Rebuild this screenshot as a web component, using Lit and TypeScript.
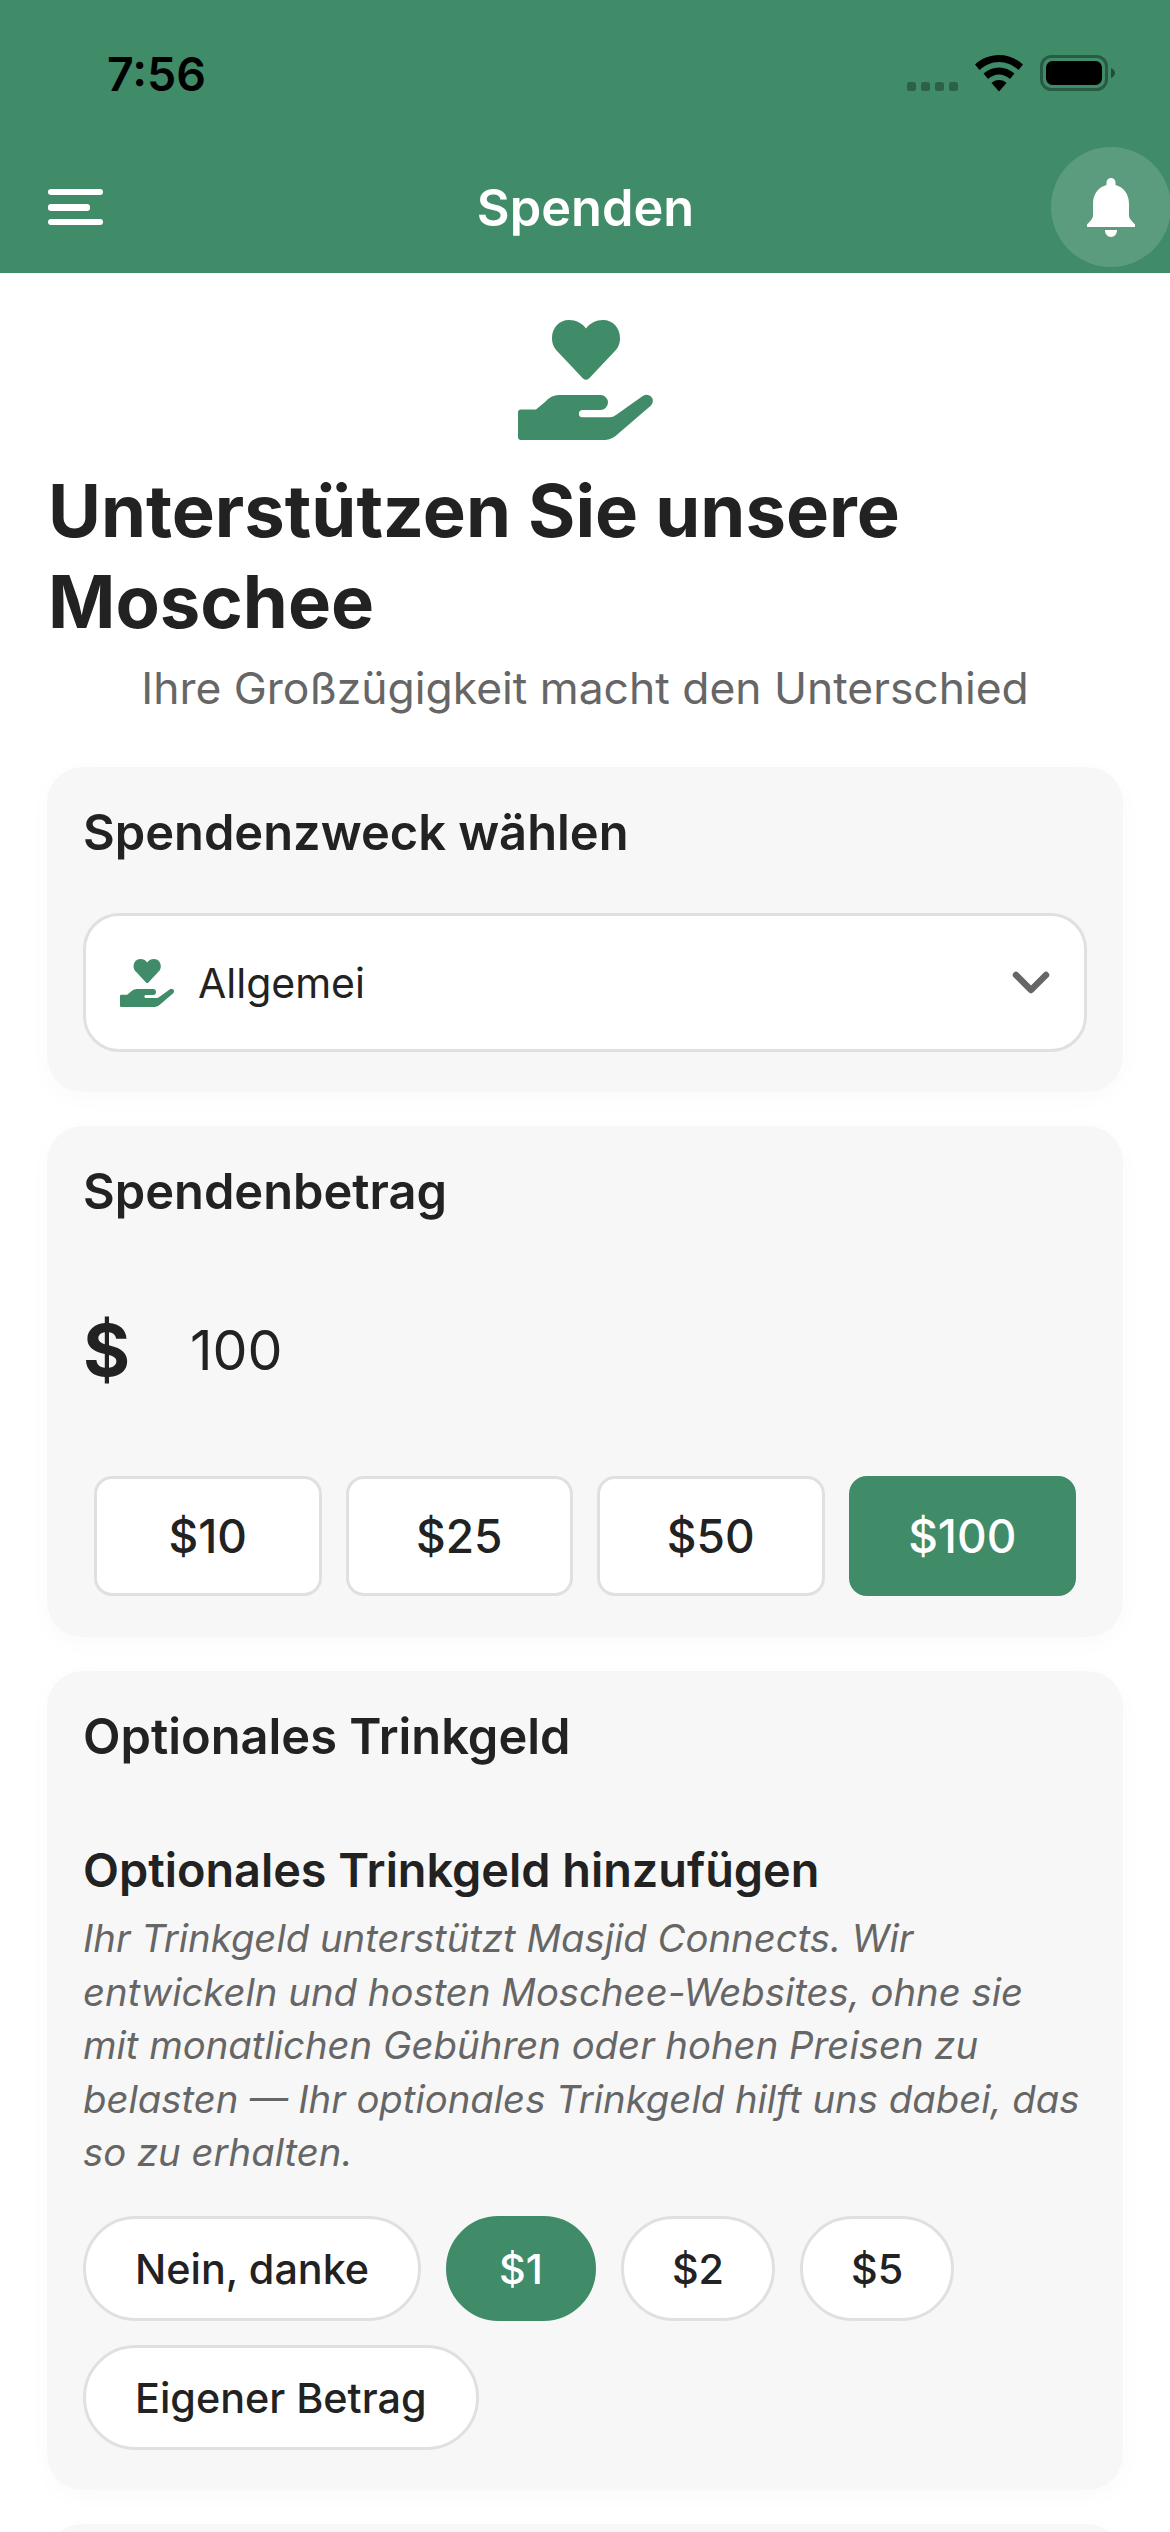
import { LitElement, html, css, svg } from "lit";
import { customElement } from "lit/decorators.js";

const handHeart = svg`
  <path d="M68 8.5C72 3 78 0 85 0C95 0 102 8 102 18C102 24 100 28 96 32L71 58.5Q68 61 65 58.5L40 32C36 28 34 24 34 18C34 8 41 0 51 0C58 0 64 3 68 8.5Z"/>
  <path d="M3 89.5H18L27 82Q33 75 41 75H82.5A7.5 7.5 0 0 1 82.5 90H64A3.7 3.7 0 0 0 64 97.3H92Q95 97.3 98 95L124 76.5A6 6 0 0 1 133 85.5L101 113Q94 120 87 120H3A3 3 0 0 1 0 117V92.5A3 3 0 0 1 3 89.5Z"/>`;

@customElement("app-root")
export class AppRoot extends LitElement {
  static styles = css`
    :host {
      display: block;
      width: 1170px;
      height: 2532px;
      overflow: hidden;
      background: #fff;
      font-family: Inter, "Liberation Sans", sans-serif;
      color: #222;
    }
    .header {
      background: #408b68;
      height: 273px;
      box-sizing: border-box;
      display: flex;
      flex-direction: column;
    }
    .status {
      height: 147px;
      box-sizing: border-box;
      padding: 50px 55px 0 107px;
      display: flex;
      justify-content: space-between;
      align-items: flex-start;
    }
    .time { font-size: 46.5px; font-weight: 600; line-height: 48px; color: #000; }
    .status-icons { display: flex; align-items: flex-start; margin-top: 5px; }
    .nav {
      height: 120px;
      display: flex;
      align-items: center;
      justify-content: space-between;
      padding-left: 48px;
      margin-right: -1px;
      position: relative;
    }
    .nav-title {
      position: absolute;
      left: 0;
      right: 0;
      text-align: center;
      font-size: 50.5px;
      font-weight: 600;
      color: #fff;
    }
    .bell {
      width: 120px;
      height: 120px;
      border-radius: 50%;
      background: rgba(255, 255, 255, 0.15);
      display: flex;
      align-items: center;
      justify-content: center;
    }
    .hero { display: flex; justify-content: center; padding-top: 47px; }
    .hero svg { display: block; fill: #408b68; }
    h1 {
      margin: 25px 48px 0;
      font-size: 72.35px;
      line-height: 91px;
      font-weight: 700;
      color: #222;
    }
    .sub {
      text-align: center;
      font-size: 44.4px;
      line-height: 60px;
      color: #666;
      margin: 11px 0 0;
    }
    .card {
      margin: 0 47px 34px;
      background: #f7f7f7;
      border-radius: 36px;
      padding: 36px 36px 39.5px;
      box-shadow: 0 6px 24px rgba(0, 0, 0, 0.025);
    }
    .c1 { margin-top: 49px; }
    h2 {
      margin: 0;
      font-size: 48.8px;
      line-height: 60px;
      font-weight: 600;
      color: #222;
    }
    .select {
      margin-top: 50px;
      height: 139px;
      box-sizing: border-box;
      border: 3px solid #e0e0e0;
      border-radius: 36px;
      background: #fff;
      display: flex;
      align-items: center;
      padding: 0 36px 0 34px;
    }
    .select svg.icon { fill: #408b68; display: block; }
    .select span { margin-left: 24px; font-size: 41px; font-weight: 400; flex: 1; }
    .chev { margin-right: -4px; }
    .amount { display: flex; align-items: center; height: 120px; margin-top: 68px; }
    .dollar { font-size: 72px; font-weight: 700; width: 107px; }
    .val { font-size: 55.5px; font-weight: 400; }
    .presets {
      display: flex;
      gap: 24px;
      margin: 66.5px 11px 1.5px;
    }
    .preset {
      flex: 1;
      height: 120px;
      box-sizing: border-box;
      border: 3px solid #e0e0e0;
      border-radius: 18px;
      background: #fff;
      display: flex;
      align-items: center;
      justify-content: center;
      font-size: 46px;
      font-weight: 500;
    }
    .preset.on { background: #408b68; border-color: #408b68; color: #fff; }
    h3 {
      margin: 72.6px 0 0;
      font-size: 46.8px;
      line-height: 60px;
      font-weight: 600;
      color: #222;
    }
    .note {
      margin: 12.4px 0 0;
      font-size: 38.3px;
      line-height: 53.6px;
      font-style: italic;
      color: #666;
    }
    .pills { display: flex; flex-wrap: wrap; gap: 24px 25px; margin-top: 36.5px; }
    .pill {
      height: 105px;
      box-sizing: border-box;
      border: 3px solid #e0e0e0;
      border-radius: 60px;
      background: #fff;
      padding: 0 49px;
      display: flex;
      align-items: center;
      font-size: 41.3px;
      font-weight: 450;
      color: #222;
    }
    .pill.num { padding: 0 48px; }
    .pill.on { background: #408b68; border-color: #408b68; color: #fff; padding: 0 50px; }
    .rest { height: 200px; }
  `;

  render() {
    return html`
      <div class="header">
        <div class="status">
          <div class="time">7:56</div>
          <svg class="status-icons" width="208" height="40" viewBox="0 0 208 40">
            <g fill="#000" fill-opacity="0.3">
              <rect x="0" y="27" width="9" height="9" rx="2.5"/>
              <rect x="14" y="27" width="9" height="9" rx="2.5"/>
              <rect x="28" y="27" width="9" height="9" rx="2.5"/>
              <rect x="42" y="27" width="9" height="9" rx="2.5"/>
            </g>
            <path fill="#000" d="M92 0C101 0 109.500 3.500 116 9.500L111.500 15C106 10 99.500 7 92 7C84.500 7 78 10 72.500 15L68 9.500C74.500 3.500 83 0 92 0Z"/>
            <path fill="#000" d="M92 12.500C97.500 12.500 103 14.500 107.500 18.500L103 24C99.500 21 96 19.500 92 19.500C88 19.500 84.500 21 81 24L76.500 18.500C81 14.500 86.500 12.500 92 12.500Z"/>
            <path fill="#000" d="M92 25C95 25 97.500 26 99.500 28L92 36.500L84.500 28C86.500 26 89 25 92 25Z"/>
            <rect x="134.500" y="1.500" width="65" height="33" rx="10" fill="none" stroke="#000" stroke-opacity="0.35" stroke-width="3"/>
            <rect x="139" y="6" width="56" height="24" rx="6.500" fill="#000"/>
            <path d="M204 13V23C206.500 22 208 20 208 18C208 16 206.500 14 204 13Z" fill="#000" fill-opacity="0.45"/>
          </svg>
        </div>
        <div class="nav">
          <svg width="55" height="37" viewBox="0 0 55 37" fill="#fff">
            <rect x="0" y="0" width="55" height="6" rx="3"/>
            <rect x="0" y="15" width="42" height="7" rx="3"/>
            <rect x="0" y="30" width="55" height="6" rx="3"/>
          </svg>
          <div class="nav-title">Spenden</div>
          <div class="bell">
            <svg width="48" height="59" viewBox="0 0 48 59" fill="#fff">
              <path d="M24 0A4.500 4.500 0 0 1 28.500 4.500V7C36 9 42 15 42 26V37C42 41 44 42 48 46.500V49H0V46.500C4 42 6 41 6 37V26C6 15 12 9 19.500 7V4.500A4.500 4.500 0 0 1 24 0Z"/>
              <path d="M18 52H30C30 56 27.500 59 24 59C20.500 59 18 56 18 52Z"/>
            </svg>
          </div>
        </div>
      </div>

      <div class="hero">
        <svg width="135" height="120" viewBox="0 0 135 120">${handHeart}</svg>
      </div>
      <h1>Unterstützen Sie unsere Moschee</h1>
      <p class="sub">Ihre Großzügigkeit macht den Unterschied</p>

      <div class="card c1">
        <h2>Spendenzweck wählen</h2>
        <div class="select">
          <svg class="icon" width="54" height="48" viewBox="0 0 135 120">${handHeart}</svg>
          <span>Allgemei</span>
          <svg class="chev" width="42" height="28" viewBox="0 0 42 28" fill="none" stroke="#666" stroke-width="6.500" stroke-linecap="round" stroke-linejoin="round">
            <path d="M6 6L21 21L36 6"/>
          </svg>
        </div>
      </div>

      <div class="card">
        <h2>Spendenbetrag</h2>
        <div class="amount">
          <div class="dollar">$</div>
          <div class="val">100</div>
        </div>
        <div class="presets">
          <div class="preset">$10</div>
          <div class="preset">$25</div>
          <div class="preset">$50</div>
          <div class="preset on">$100</div>
        </div>
      </div>

      <div class="card">
        <h2>Optionales Trinkgeld</h2>
        <h3>Optionales Trinkgeld hinzufügen</h3>
        <p class="note">Ihr Trinkgeld unterstützt Masjid Connects. Wir entwickeln und hosten Moschee-Websites, ohne sie mit monatlichen Gebühren oder hohen Preisen zu belasten — Ihr optionales Trinkgeld hilft uns dabei, das so zu erhalten.</p>
        <div class="pills">
          <div class="pill">Nein, danke</div>
          <div class="pill on">$1</div>
          <div class="pill num">$2</div>
          <div class="pill num">$5</div>
          <div class="pill">Eigener Betrag</div>
        </div>
      </div>
      <div class="card rest"></div>
    `;
  }
}
